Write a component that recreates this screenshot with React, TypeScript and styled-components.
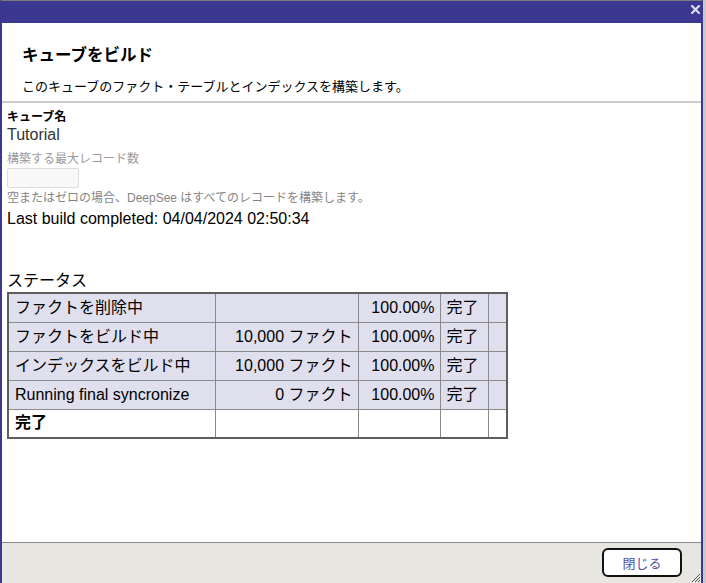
import styled, { createGlobalStyle } from 'styled-components'

const purple = '#3b3891'
const font = '"Liberation Sans", "Noto Sans CJK JP", sans-serif'

const GlobalStyle = createGlobalStyle`
  html, body {
    margin: 0;
    padding: 0;
  }
  body {
    background: #c9c9c9;
    font-family: ${font};
    color: #000;
  }
`

const Window = styled.div`
  box-sizing: border-box;
  width: 703px;
  height: 583px;
  display: flex;
  flex-direction: column;
  border-top: 1px solid #7a7a7a;
  border-left: 2px solid ${purple};
  border-right: 2px solid ${purple};
  background: #fff;
  position: relative;
`

const TitleBar = styled.div`
  height: 22px;
  margin: 0 -2px;
  background: ${purple};
  display: flex;
  justify-content: flex-end;
  align-items: flex-start;
  padding: 4px 3px 0 0;
  box-sizing: border-box;
`

const CloseX = styled.svg`
  width: 9px;
  height: 9px;
  display: block;
`

const Header = styled.div`
  padding: 22px 20px 6px;
  border-bottom: 2px solid #cccccc;
`

const Title = styled.h1`
  margin: 0;
  font-size: 16.5px;
  line-height: 20px;
  font-weight: bold;
`

const Subtitle = styled.p`
  margin: 14px 0 0;
  font-size: 13px;
  line-height: 16px;
`

const Body = styled.div`
  flex: 1;
  padding: 6px 5px 0;
`

const FieldLabel = styled.div<{ $muted?: boolean }>`
  font-size: 12px;
  line-height: 16px;
  font-weight: ${(p) => (p.$muted ? 'normal' : 'bold')};
  color: ${(p) => (p.$muted ? '#9a9a9a' : '#000')};
  margin-top: ${(p) => (p.$muted ? '6px' : '0')};
`

const FieldValue = styled.div`
  font-size: 16px;
  line-height: 20px;
  color: #333;
`

const TextInput = styled.input`
  display: block;
  box-sizing: border-box;
  width: 72px;
  height: 20px;
  margin-top: 1px;
  border: 1px solid #dddddd;
  border-radius: 2px;
  background: #f8f8f8;
`

const Hint = styled.div`
  font-size: 12px;
  line-height: 16px;
  color: #858585;
  margin-top: 2px;
`

const LastBuild = styled.div`
  font-size: 16px;
  line-height: 20px;
  margin-top: 3px;
`

const SectionTitle = styled.div`
  font-size: 16px;
  line-height: 20px;
  margin-top: 42px;
`

const StatusTable = styled.table`
  margin-top: 1px;
  border-collapse: collapse;
  border: 2px solid #5e5e5e;
  font-size: 16px;
  table-layout: fixed;
  width: 499px;
`

const Row = styled.tr<{ $done?: boolean }>`
  height: 29px;
  background: ${(p) => (p.$done ? '#ffffff' : '#e0dfee')};
`

const Cell = styled.td<{ $right?: boolean; $bold?: boolean }>`
  padding: 0 5px 0 6px;
  border: 1px solid #8a8a8a;
  text-align: ${(p) => (p.$right ? 'right' : 'left')};
  font-weight: ${(p) => (p.$bold ? 'bold' : 'normal')};
  line-height: 20px;
  white-space: nowrap;
  overflow: hidden;
`

const Footer = styled.div`
  height: 41px;
  box-sizing: border-box;
  border-top: 1px solid #8a8a8a;
  background: #e8e6e1;
  display: flex;
  justify-content: flex-end;
  align-items: flex-start;
  padding: 5px 19px 0 0;
`

const CloseButton = styled.button`
  box-sizing: border-box;
  width: 80px;
  height: 29px;
  border: 2px solid #111;
  border-radius: 6px;
  background: #fff;
  color: #5450a6;
  font-family: ${font};
  font-size: 13px;
  padding: 0;
`

const Grip = styled.svg`
  position: absolute;
  right: 0;
  bottom: 0;
  width: 12px;
  height: 12px;
`

const colWidths = [207, 143, 82, 48, 19]

const rows = [
  { step: 'ファクトを削除中', count: '', pct: '100.00%', state: '完了' },
  { step: 'ファクトをビルド中', count: '10,000 ファクト', pct: '100.00%', state: '完了' },
  { step: 'インデックスをビルド中', count: '10,000 ファクト', pct: '100.00%', state: '完了' },
  { step: 'Running final syncronize', count: '0 ファクト', pct: '100.00%', state: '完了' },
]

export default function App() {
  return (
    <>
      <GlobalStyle />
      <Window>
        <TitleBar>
          <CloseX viewBox="0 0 9 9">
            <path d="M1 1 L8 8 M8 1 L1 8" stroke="#dcdcf2" strokeWidth="2.2" strokeLinecap="square" />
          </CloseX>
        </TitleBar>

        <Header>
          <Title>キューブをビルド</Title>
          <Subtitle>このキューブのファクト・テーブルとインデックスを構築します。</Subtitle>
        </Header>

        <Body>
          <FieldLabel>キューブ名</FieldLabel>
          <FieldValue>Tutorial</FieldValue>
          <FieldLabel $muted>構築する最大レコード数</FieldLabel>
          <TextInput type="text" disabled />
          <Hint>空またはゼロの場合、DeepSee はすべてのレコードを構築します。</Hint>
          <LastBuild>Last build completed: 04/04/2024 02:50:34</LastBuild>

          <SectionTitle>ステータス</SectionTitle>
          <StatusTable>
            <colgroup>
              {colWidths.map((w, i) => (
                <col key={i} style={{ width: w }} />
              ))}
            </colgroup>
            <tbody>
              {rows.map((r) => (
                <Row key={r.step}>
                  <Cell>{r.step}</Cell>
                  <Cell $right>{r.count}</Cell>
                  <Cell $right>{r.pct}</Cell>
                  <Cell>{r.state}</Cell>
                  <Cell />
                </Row>
              ))}
              <Row $done>
                <Cell $bold>完了</Cell>
                <Cell />
                <Cell />
                <Cell />
                <Cell />
              </Row>
            </tbody>
          </StatusTable>
        </Body>

        <Footer>
          <CloseButton type="button">閉じる</CloseButton>
        </Footer>
        <Grip viewBox="0 0 12 12">
          <path d="M11 3 L3 11 M11 6 L6 11 M11 9 L9 11" stroke="#555" strokeWidth="1" />
        </Grip>
      </Window>
    </>
  )
}
